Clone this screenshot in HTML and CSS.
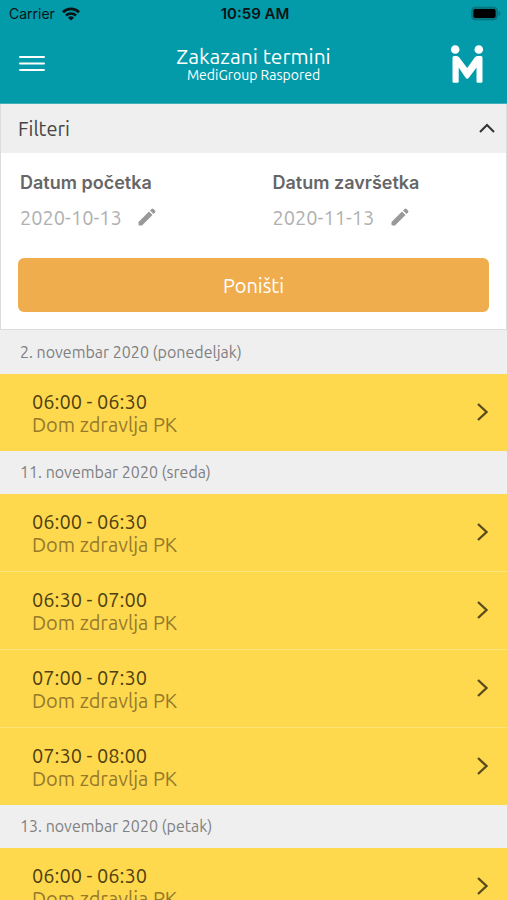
FILE: index.html
```html
<!DOCTYPE html>
<html lang="sr-Latn">
<head>
    <meta charset="UTF-8">
    <meta name="viewport" content="width=device-width, initial-scale=1.0">
    <title>Zakazani termini</title>
    <link rel="stylesheet" href="styles.css">
</head>
<body>
    <header class="top">
        <div class="status-bar">
            <div class="carrier">
                <span>Carrier</span>
                <svg width="18" height="14" viewBox="0 0 18 14" fill="none" stroke="#0a1414" stroke-width="2.6">
                    <path d="M1 5.2a11.4 11.4 0 0 1 16 0"/>
                    <path d="M4 8.5a7.2 7.2 0 0 1 10 0"/>
                    <path d="M9 13.6L6 10.7a4.3 4.3 0 0 1 6 0z" fill="#0a1414" stroke="none"/>
                </svg>
            </div>
            <span class="clock">10:59 AM</span>
            <svg class="battery" width="30" height="16" viewBox="0 0 30 16">
                <rect x="0.7" y="1.2" width="25.6" height="12.6" rx="3.5" fill="#057a85" stroke="#08717b"/>
                <rect x="2.4" y="3" width="22.2" height="9" rx="2" fill="#000"/>
                <path d="M27.6 5.2c2.4 1 2.4 3.8 0 4.8z" fill="#08717b"/>
            </svg>
        </div>
        <div class="nav-bar">
            <button class="menu-button" type="button" aria-label="Meni">
                <svg width="26" height="18" viewBox="0 0 26 18" stroke="#fff" stroke-width="2" stroke-linecap="round">
                    <path d="M1 2h24M1 8.500h24M1 15h24"/>
                </svg>
            </button>
            <div class="titles">
                <h1>Zakazani termini</h1>
                <p>MediGroup Raspored</p>
            </div>
            <svg class="logo" width="34" height="38" viewBox="0 0 34 38" fill="#fff">
                <circle cx="5.200" cy="4.500" r="4.300"/>
                <circle cx="28.800" cy="4.500" r="4.300"/>
                <path d="M2.500 12.500q0-1.500 1.500-1.500h2.700q1.600 0 2.600 1.500L17.200 23l7.500-10.500q1-1.500 2.600-1.500H31q1.500 0 1.500 1.500V36.500q0 1.200-1.200 1.200h-3.600q-1.200 0-1.200-1.200V22.500l-7.500 10q-1.800 2.400-3.600 0L8.700 22.500v14q0 1.200-1.200 1.200H3.700q-1.200 0-1.200-1.200z"/>
            </svg>
        </div>
    </header>

    <main>
        <section class="filters">
            <button class="filters-toggle" type="button" aria-expanded="true">
                <span>Filteri</span>
                <svg width="18" height="12" viewBox="0 0 18 12" fill="none" stroke="#333" stroke-width="2">
                    <path d="M2 9l7-7 7 7"/>
                </svg>
            </button>
            <form class="filters-form">
                <div class="date-fields">
                    <div class="date-field">
                        <label for="startDate">Datum početka</label>
                        <div class="date-value">
                            <input type="text" id="startDate" value="2020-10-13">
                            <button type="button" aria-label="Izmeni datum početka">
                                <svg width="18" height="18" viewBox="0 0 18 18" fill="#999">
                                    <path d="M0.500 14L11 3.500l3.500 3.500L4 17.500H1.500q-1 0-1-1z"/>
                                    <path d="M12 2.500L13.500 1q1-1 2 0l1.500 1.500q1 1 0 2L15.500 6z"/>
                                </svg>
                            </button>
                        </div>
                    </div>
                    <div class="date-field">
                        <label for="endDate">Datum završetka</label>
                        <div class="date-value">
                            <input type="text" id="endDate" value="2020-11-13">
                            <button type="button" aria-label="Izmeni datum završetka">
                                <svg width="18" height="18" viewBox="0 0 18 18" fill="#999">
                                    <path d="M0.500 14L11 3.500l3.500 3.500L4 17.500H1.500q-1 0-1-1z"/>
                                    <path d="M12 2.500L13.500 1q1-1 2 0l1.500 1.500q1 1 0 2L15.500 6z"/>
                                </svg>
                            </button>
                        </div>
                    </div>
                </div>
                <button class="reset-button" type="button">Poništi</button>
            </form>
        </section>

        <section class="day">
            <h2>2. novembar 2020 (ponedeljak)</h2>
            <ul>
                <li><a class="slot" href="#"><span><b>06:00 - 06:30</b>Dom zdravlja PK</span><svg width="14" height="20" viewBox="0 0 14 20"><path d="M2 1l8.500 8L2 17"/></svg></a></li>
            </ul>
        </section>

        <section class="day">
            <h2>11. novembar 2020 (sreda)</h2>
            <ul>
                <li><a class="slot" href="#"><span><b>06:00 - 06:30</b>Dom zdravlja PK</span><svg width="14" height="20" viewBox="0 0 14 20"><path d="M2 1l8.500 8L2 17"/></svg></a></li>
                <li><a class="slot" href="#"><span><b>06:30 - 07:00</b>Dom zdravlja PK</span><svg width="14" height="20" viewBox="0 0 14 20"><path d="M2 1l8.500 8L2 17"/></svg></a></li>
                <li><a class="slot" href="#"><span><b>07:00 - 07:30</b>Dom zdravlja PK</span><svg width="14" height="20" viewBox="0 0 14 20"><path d="M2 1l8.500 8L2 17"/></svg></a></li>
                <li><a class="slot" href="#"><span><b>07:30 - 08:00</b>Dom zdravlja PK</span><svg width="14" height="20" viewBox="0 0 14 20"><path d="M2 1l8.500 8L2 17"/></svg></a></li>
            </ul>
        </section>

        <section class="day">
            <h2>13. novembar 2020 (petak)</h2>
            <ul>
                <li><a class="slot" href="#"><span><b>06:00 - 06:30</b>Dom zdravlja PK</span><svg width="14" height="20" viewBox="0 0 14 20"><path d="M2 1l8.500 8L2 17"/></svg></a></li>
            </ul>
        </section>
    </main>
</body>
</html>
```

FILE: styles.css
```css
* {
    margin: 0;
    padding: 0;
    box-sizing: border-box;
}

html {
    height: 100%;
    overflow: hidden;
}

body {
    height: 100%;
    overflow: hidden;
    display: flex;
    flex-direction: column;
    font-family: Ubuntu, "Noto Sans", sans-serif;
    color: #444;
    background-color: #efeff0;
}

button, input {
    font: inherit;
    color: inherit;
    border: none;
    background: none;
}

svg {
    display: block;
    flex: none;
}

/* Header */
.top {
    flex: none;
    background-color: #039aaa;
    border-bottom: 1px solid #42b1bc;
}

.status-bar {
    display: grid;
    grid-template-columns: 1fr auto 1fr;
    align-items: center;
    height: 27px;
    padding: 0 6px 0 9px;
    font-family: Inter, sans-serif;
    font-size: 14px;
    color: #0a1414;
}

.carrier {
    display: flex;
    align-items: center;
    gap: 7px;
}

.clock {
    font-size: 15px;
    font-weight: 600;
}

.battery {
    justify-self: end;
}

.nav-bar {
    display: grid;
    grid-template-columns: 1fr auto 1fr;
    align-items: center;
    height: 76px;
    padding: 0 19px 2px;
    color: #fff;
}

.menu-button {
    justify-self: start;
}

.titles {
    text-align: center;
}

.titles h1 {
    font-size: 21px;
    font-weight: 400;
    line-height: 22px;
}

.titles p {
    font-size: 14px;
    line-height: 16px;
}

.logo {
    justify-self: end;
    margin-right: 4px;
}

/* Filters */
main {
    flex: 1;
    overflow: hidden;
}

.filters {
    margin-bottom: 1px;
    background-color: #fff;
    border: 1px solid #dcdcdc;
    border-top: none;
}

.filters-toggle {
    display: flex;
    justify-content: space-between;
    align-items: center;
    width: 100%;
    height: 49px;
    padding: 0 10px 0 17px;
    font-size: 20px;
    background-color: #efeff0;
}

.filters-form {
    padding: 17px;
}

.date-fields {
    display: grid;
    grid-template-columns: 1fr 1fr;
    gap: 36px;
    padding: 0 0 20px 2px;
}

.date-field label {
    display: block;
    font-family: Inter, sans-serif;
    font-size: 18px;
    font-weight: 600;
    line-height: 26px;
    color: #666;
}

.date-value {
    display: flex;
    align-items: center;
    gap: 14px;
    height: 42px;
}

.date-value input {
    width: 104px;
    font-size: 20px;
    color: #b0b0b0;
}

.reset-button {
    display: block;
    width: 100%;
    height: 54px;
    font-size: 20px;
    color: #fff;
    background-color: #f0ad4e;
    border-radius: 6px;
}

/* Appointments */
.day h2 {
    padding: 0 20px;
    font-size: 16px;
    font-weight: 400;
    line-height: 43px;
    color: #808080;
}

.day ul {
    list-style: none;
}

.day li + li {
    border-top: 1px solid #ffe47c;
}

.slot {
    display: flex;
    justify-content: space-between;
    align-items: center;
    height: 77px;
    padding: 0 17px 0 32px;
    font-size: 20px;
    line-height: 23px;
    color: #967a2c;
    text-decoration: none;
    background-color: #ffd94d;
}

.slot b {
    display: block;
    font-weight: 400;
    color: #4f4010;
}

.slot svg {
    fill: none;
    stroke: #5a4c1b;
    stroke-width: 2.4;
}
```
